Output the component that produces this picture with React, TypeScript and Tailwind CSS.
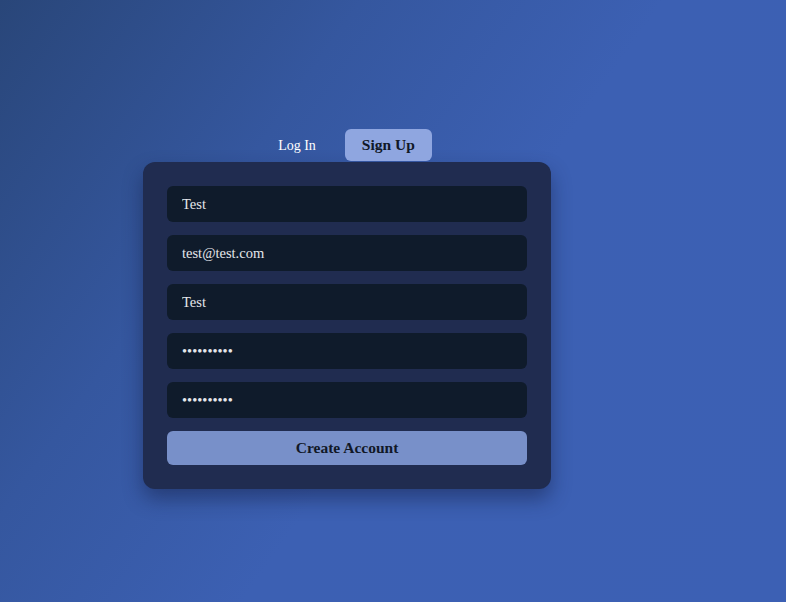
import { useState } from 'react';

const inputClass =
  'h-9 w-full rounded-md bg-[#0f1b2b] px-[15px] text-[14.5px] text-[#e5e7eb] caret-white outline-none';

export default function App() {
  const [tab, setTab] = useState<'login' | 'signup'>('signup');

  return (
    <div
      className="h-[602px] w-full overflow-hidden bg-[linear-gradient(125deg,#294679_0%,#35579f_30%,#3c60b3_55%,#3c60b4_100%)] pt-[129px] pl-[143px]"
      style={{ fontFamily: '"Liberation Serif", Georgia, serif' }}
    >
      <div className="w-[408px]">
        {/* Tabs */}
        <div className="flex h-8 justify-center gap-[13px]">
          <button
            onClick={() => setTab('login')}
            className={`rounded-md px-4 text-[14px] ${
              tab === 'login' ? 'bg-[#8fa6e0] font-bold text-[#111827]' : 'text-white'
            }`}
          >
            Log In
          </button>
          <button
            onClick={() => setTab('signup')}
            className={`rounded-md px-[17px] text-[15.5px] ${
              tab === 'signup' ? 'bg-[#8fa6e0] font-bold text-[#111827]' : 'text-white'
            }`}
          >
            Sign Up
          </button>
        </div>

        {/* Form card */}
        <div className="mt-px rounded-xl bg-[#202c50] p-6 shadow-[0_10px_20px_rgba(15,25,60,0.45)]">
          <form className="flex flex-col gap-[13px]" onSubmit={(e) => e.preventDefault()}>
            <input className={inputClass} defaultValue="Test" />
            <input className={inputClass} defaultValue="test@test.com" />
            <input className={inputClass} defaultValue="Test" />
            <input className={inputClass} type="password" defaultValue="1234567890" />
            <input className={inputClass} type="password" defaultValue="1234567890" autoFocus />
            <button
              type="submit"
              className="h-[34px] w-full rounded-md bg-[#7890c9] pb-px text-[15.5px] font-bold text-[#111827]"
            >
              Create Account
            </button>
          </form>
        </div>
      </div>
    </div>
  );
}
